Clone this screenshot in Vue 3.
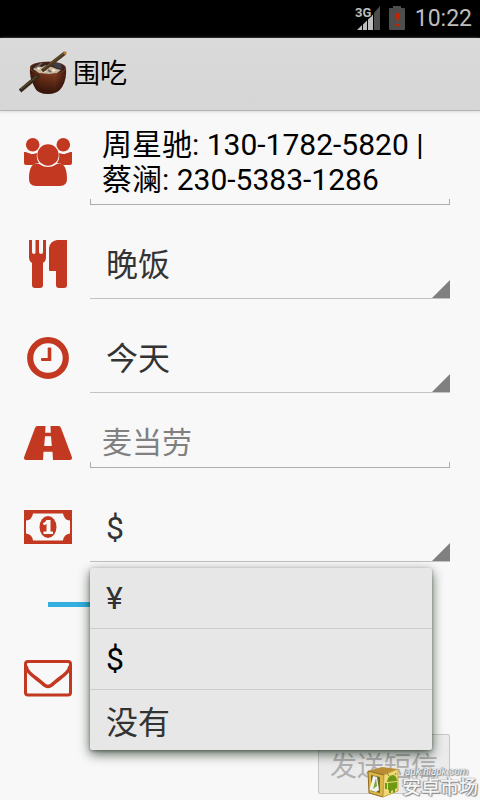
<script setup>
import { ref } from 'vue'

const contacts = ref('周星驰: 130-1782-5820 | 蔡澜: 230-5383-1286')
const meal = ref('晚饭')
const day = ref('今天')
const place = ref('')
const currency = ref('$')
const amount = ref(100)
const menuOpen = ref(true)

const meals = ['早饭', '午饭', '晚饭']
const days = ['今天', '明天']
const currencies = ['¥', '$', '没有']

function pick(item) {
  currency.value = item
  menuOpen.value = false
}
</script>

<template>
  <div class="screen">
    <div class="status">
      <svg class="signal" width="26" height="26" viewBox="0 0 26 26" aria-hidden="true">
        <path d="M2 24 L7 19 V24Z M8 18.500 L12 14.500 V24 H8Z M13 13.500 L18 8.500 V24 H13Z" fill="#bebebe" />
        <path d="M19 7 L25 0 V24 H19Z" fill="#4d4d4d" />
        <text x="0" y="11" class="net">3G</text>
      </svg>
      <svg class="battery" width="16" height="24" viewBox="0 0 16 24" aria-hidden="true">
        <path d="M4 0 H12 V2 H15 Q16 2 16 3 V23 Q16 24 15 24 H1 Q0 24 0 23 V3 Q0 2 1 2 H4Z" fill="#4d4d4d" />
        <path d="M7 7 H10 V11 L9 16 H8 L7 11Z M7 18 H10 V20 H7Z" fill="#c62300" />
      </svg>
      <time class="clock">10:22</time>
    </div>

    <header class="bar">
      <svg class="bowl" width="50" height="46" viewBox="0 0 50 46" aria-hidden="true">
        <defs>
          <linearGradient id="wood" x1="0" x2="1" y1="0" y2="0">
            <stop offset="0" stop-color="#3d170c" />
            <stop offset=".3" stop-color="#6f3019" />
            <stop offset=".7" stop-color="#7c3a21" />
            <stop offset="1" stop-color="#41190d" />
          </linearGradient>
          <linearGradient id="shade" x1="0" x2="0" y1="0" y2="1">
            <stop offset=".4" stop-color="#200a04" stop-opacity="0" />
            <stop offset="1" stop-color="#200a04" stop-opacity=".8" />
          </linearGradient>
        </defs>
        <path d="M11 16 Q10 26 15 35 Q18 43 29 43 Q39 43 43 36 Q48 28 47 17 Q44 10 29 11 Q13 11 11 16Z" fill="url(#wood)" />
        <path d="M11 16 Q10 26 15 35 Q18 43 29 43 Q39 43 43 36 Q48 28 47 17 Q44 10 29 11 Q13 11 11 16Z" fill="url(#shade)" />
        <ellipse cx="29" cy="17" rx="18" ry="6.500" fill="#7a4027" />
        <ellipse cx="29" cy="17" rx="17" ry="6" fill="#39211a" />
        <path d="M14 18 L18 15 L23 16 L27 14 L33 16 L38 18 L42 19 L38 22 L30 23 L20 22Z" fill="#c9b8a0" />
        <path d="M17 16 L21 17 L20 19Z M25 17 L29 16 L28 19Z M33 18 L37 19 L34 21Z M22 20 L27 20 L25 22Z" fill="#fff3df" />
        <path d="M33 11 L42 13 L43 18 L35 16Z" fill="#40404a" />
        <path d="M16 17 L23 12 M29 19 L32 21" stroke="#6a625a" stroke-width="2" />
        <path d="M46 2 L23 20" stroke="#4c3820" stroke-width="3.500" />
        <path d="M20 24 L1 40" stroke="#342b1c" stroke-width="4" />
        <path d="M45 2 L24 18 M18 25 L2 38" stroke="#6b5130" stroke-width="1" />
        <path d="M45 3 L47 1" stroke="#b77b3c" stroke-width="3" />
      </svg>
      <h1 class="title">围吃</h1>
    </header>

    <form class="form" @submit.prevent>
      <div class="row">
        <label class="icon" for="contacts" aria-label="联系人">
          <svg width="48" height="48" viewBox="0 0 48 48">
            <circle cx="8.700" cy="6.800" r="6.800" />
            <circle cx="39.300" cy="6.800" r="6.800" />
            <path d="M0 14 C4 14 5 16 9 16 C11 16 12 15 13 15 Q12 21 15 25 Q11 25 9 27 H2 Q0 27 0 25Z" />
            <path d="M48 14 C44 14 43 16 39 16 C37 16 36 15 35 15 Q36 21 33 25 Q37 25 39 27 H46 Q48 27 48 25Z" />
            <circle cx="24" cy="17" r="10.700" />
            <path d="M13 25.500 C16 25.500 18 29 24 29 C30 29 32 25.500 35 25.500 C41 25.500 43 32 43 41 Q43 48 36 48 H12 Q5 48 5 41 C5 32 7 25.500 13 25.500Z" />
          </svg>
        </label>
        <textarea id="contacts" v-model="contacts" class="field edit multi" rows="2" spellcheck="false"></textarea>
      </div>

      <div class="row">
        <label class="icon" for="meal" aria-label="用餐">
          <svg width="48" height="48" viewBox="0 0 48 48">
            <path d="M5 0 H8 V12 Q8 14 10 14 Q11.500 14 11.500 12 V0 H15 V12 Q15 14 17 14 Q19 14 19 12 V0 H22 V18 Q22 21 19 23 V45 Q19 48 16 48 H11 Q8 48 8 45 V23 Q5 21 5 18Z" />
            <path d="M33 0 H43 V45 Q43 48 40 48 H35 Q32 48 32 45 V31 H26 Q25 31 25 30 V8 Q26 1 33 0Z" />
          </svg>
        </label>
        <select id="meal" v-model="meal" class="field spinner">
          <option v-for="m in meals" :key="m">{{ m }}</option>
        </select>
      </div>

      <div class="row">
        <label class="icon" for="day" aria-label="时间">
          <svg width="48" height="48" viewBox="0 0 48 48">
            <circle cx="24" cy="24" r="17.800" fill="none" stroke="#c23820" stroke-width="6.200" />
            <path d="M24.500 13.500 H26.500 Q27.300 13.500 27.300 14.300 V26.200 Q27.300 27 26.500 27 H18 Q17 27 17 26 V25 Q17 24 18 24 H23.700 V14.300 Q23.700 13.500 24.500 13.500Z" />
          </svg>
        </label>
        <select id="day" v-model="day" class="field spinner">
          <option v-for="d in days" :key="d">{{ d }}</option>
        </select>
      </div>

      <div class="row">
        <label class="icon" for="place" aria-label="地点">
          <svg width="48" height="34" viewBox="0 0 48 34">
            <path fill-rule="evenodd" d="M13 0 H21.500 L21.200 6.700 H26.800 L26.500 0 H35 Q36 0 37 2 L47.500 30 Q49 34 46 34 H29 L28.500 25.700 H19.500 L19 34 H2 Q-1 34 .500 30 L11 2 Q12 0 13 0Z M21 10.300 L20.200 20 H27.800 L27 10.300Z" />
          </svg>
        </label>
        <input id="place" v-model="place" class="field edit" type="text" placeholder="麦当劳" />
      </div>

      <div class="row">
        <label class="icon" for="currency" aria-label="货币">
          <svg width="48" height="34" viewBox="0 0 48 34">
            <path fill-rule="evenodd" d="M0 0 H48 V34 H0Z M9 3.500 Q8 10 2 10.500 V23.500 Q8 24 9 30.500 H39 Q40 24 46 23.500 V10.500 Q40 10 39 3.500Z" />
            <ellipse cx="24" cy="17" rx="8.500" ry="11" />
            <path d="M22.500 10 H26.500 V21.500 H29 V24 H19.500 V21.500 H22.500 V13.800 Q21.500 15 20 15.300 L18.800 13.300 Q21.500 12.200 22.500 10Z" fill="#f8f8f8" />
          </svg>
        </label>
        <div class="anchor">
          <select id="currency" v-model="currency" class="field spinner">
            <option v-for="c in currencies" :key="c">{{ c }}</option>
          </select>
          <div v-if="menuOpen" class="menu" role="listbox" aria-label="货币">
            <button
              v-for="c in currencies"
              :key="c"
              class="item"
              :class="{ chosen: c === currency }"
              type="button"
              role="option"
              :aria-selected="c === currency"
              @click="pick(c)"
            >{{ c }}</button>
          </div>
        </div>
      </div>

      <div class="slide">
        <input v-model="amount" class="range" type="range" min="0" max="100" aria-label="金额" />
      </div>

      <div class="row note">
        <span class="icon">
          <svg width="48" height="37" viewBox="0 0 48 37">
            <rect x="1.500" y="1.500" width="45" height="33.500" rx="2.500" fill="none" stroke="#c23820" stroke-width="3" />
            <path d="M2 6 C3 13 10 16 18 23 C21 26 23 26.500 24 26.500 C25 26.500 27 26 30 23 C38 16 45 13 46 6" fill="none" stroke="#c23820" stroke-width="3.500" />
          </svg>
        </span>
      </div>

      <button class="send" type="submit" disabled>发送短信</button>
    </form>

    <div class="mark">
      <svg width="32" height="32" viewBox="0 0 32 32" aria-hidden="true">
        <path d="M1 5 L15 1 L31 3 L17 9Z" fill="#b98d34" />
        <path d="M1 5 L17 9 L16 31 L2 27Z" fill="#dcb746" stroke="#8f6b20" />
        <path d="M17 9 L31 3 V25 L16 31Z" fill="#f0d878" stroke="#c9a545" />
        <path d="M4 9 L13 11 V27 L4 25Z" fill="#6b6a33" />
        <path d="M3 22 L6 10 L10 11 L12 24 L9 26 L3 24Z" fill="#f1f4ee" />
        <path d="M6 23 L9 12 L10 20Z" fill="#79a63b" />
        <path d="M20 16 Q21 9 26 9 Q30 10 30 15Z M21 17 L30 16 V22 L28 23 V26 L26 27 V24 L24 25 V27 L22 27 V24 H21Z M18 17 H20 V23 H18Z" fill="#6d9812" />
        <path d="M22 10 L20 7 M28 9 L29 7" stroke="#6d9812" />
      </svg>
      <div class="brand">
        <span class="site">apk.hiapk.com</span>
        <span class="name">安卓市场</span>
      </div>
    </div>
  </div>
</template>

<style>
body {
  margin: 0;
  background: #f8f8f8;
}
</style>

<style scoped>
.screen {
  position: relative;
  min-height: 100vh;
  box-sizing: border-box;
  overflow: hidden;
  background: #f8f8f8;
  font-family: Roboto, "Noto Sans CJK SC", sans-serif;
  color: #000;
}
.status {
  display: flex;
  align-items: center;
  justify-content: flex-end;
  height: 38px;
  padding-right: 8px;
  background: #000;
}
.signal {
  margin-right: 8px;
}
.net {
  font: bold 13px "Liberation Sans Narrow", Roboto, sans-serif;
  fill: #bebebe;
  stroke: #000;
  stroke-width: 2px;
  paint-order: stroke;
}
.battery {
  margin-right: 10px;
  margin-bottom: 3px;
}
.clock {
  font-size: 23px;
  line-height: 38px;
  color: #bebebe;
}
.bar {
  display: flex;
  align-items: center;
  gap: 4px;
  height: 72px;
  padding-left: 19px;
  border-bottom: 1px solid #b4b4b4;
  background: linear-gradient(#dadada, #d6d6d6);
  box-shadow: 0 1px 3px #d8d8d8;
}
.title {
  margin: 0;
  font-size: 27px;
  line-height: 36px;
  font-weight: 400;
}
.form {
  display: flex;
  flex-direction: column;
  gap: 24px;
  padding: 8px 30px 5px 24px;
}
.row {
  display: flex;
  align-items: center;
  gap: 18px;
}
.icon {
  display: flex;
  flex: none;
  width: 48px;
  fill: #c23820;
}
.field {
  display: block;
  flex: 1;
  width: 100%;
  min-width: 0;
  margin: 0;
  border: 0;
  border-radius: 0;
  outline: 0;
  box-sizing: border-box;
  font-family: inherit;
  background-color: transparent;
  background-repeat: no-repeat;
}
.edit {
  height: 51px;
  padding: 0 12px;
  font-size: 30px;
  line-height: 35px;
  color: #000;
  background-image: linear-gradient(#adadad, #adadad), linear-gradient(#adadad, #adadad), linear-gradient(#adadad, #adadad);
  background-size: 100% 1px, 1px 6px, 1px 6px;
  background-position: 0 100%, 0 100%, 100% 100%;
}
.edit::placeholder {
  color: #808080;
  opacity: 1;
}
.multi {
  height: 86px;
  padding: 8px 12px;
  resize: none;
  overflow: hidden;
}
.spinner {
  appearance: none;
  height: 70px;
  padding: 2px 16px 0;
  font-size: 32px;
  color: #333;
  background-image: linear-gradient(#c3c3c3, #c3c3c3), linear-gradient(135deg, transparent 48%, #808080 52%);
  background-size: 100% 1px, 18px 18px;
  background-position: 0 100%, 100% calc(100% - 1px);
}
.anchor {
  position: relative;
  flex: 1;
}
.menu {
  position: absolute;
  z-index: 2;
  top: calc(100% + 6px);
  left: 0;
  right: 18px;
  border-radius: 2px;
  background: #e7e7e7;
  box-shadow: 0 4px 12px rgba(0, 20, 0, 0.65), 0 1px 3px rgba(0, 0, 0, 0.3);
}
.item {
  display: block;
  width: 100%;
  height: 61px;
  padding: 0 16px;
  border: 0;
  border-bottom: 1px solid #cbcbcb;
  background: none;
  font-family: inherit;
  font-size: 32px;
  text-align: left;
  color: #333;
}
.item:last-child {
  height: 60px;
  border-bottom: 0;
}
.chosen {
  color: #000;
}
.slide {
  display: flex;
  align-items: center;
  height: 36px;
  padding: 0 24px;
}
.range {
  appearance: none;
  width: 100%;
  height: 5px;
  margin: 0;
  background: #33b0e0;
}
.range::-webkit-slider-thumb {
  appearance: none;
  width: 5px;
  height: 5px;
  background: #33b0e0;
}
.note {
  height: 64px;
}
.send {
  align-self: flex-end;
  width: 132px;
  height: 60px;
  padding: 0;
  border: 1px solid #c8c8c8;
  border-radius: 2px;
  background: #ebebeb;
  font-family: inherit;
  font-size: 27px;
  color: #b0b0b0;
}
.mark {
  position: absolute;
  z-index: 3;
  right: 2px;
  bottom: 2px;
  display: flex;
  align-items: flex-end;
  gap: 3px;
}
.brand {
  display: flex;
  flex-direction: column;
  color: #f4f4f4;
  text-shadow: 0 0 1px #777, 1px 1px 1px #888, -1px 0 1px #999;
}
.site {
  padding-left: 3px;
  font-size: 10px;
  line-height: 12px;
  font-style: italic;
}
.name {
  font-size: 19px;
  line-height: 20px;
  font-weight: 500;
}
</style>
